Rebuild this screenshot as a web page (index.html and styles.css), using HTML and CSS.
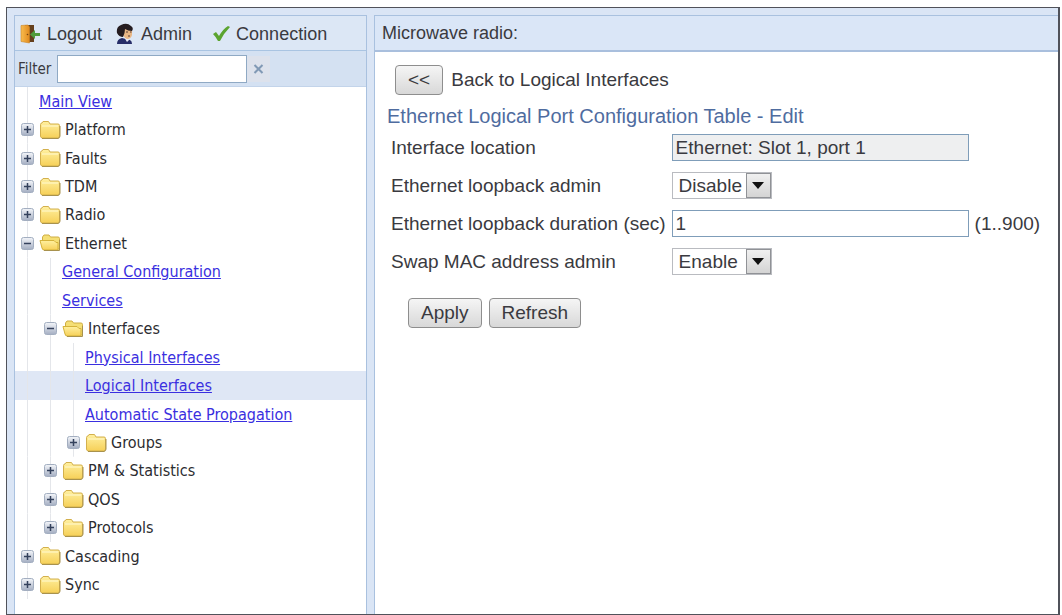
FILE: index.html
```html
<!DOCTYPE html>
<html lang="en">
<head>
    <meta charset="UTF-8">
    <meta name="viewport" content="width=device-width, initial-scale=1.0">
    <title>Microwave radio</title>
    <link rel="stylesheet" href="styles.css">
</head>
<body>
    <!-- Shared icons -->
    <svg class="sprite" aria-hidden="true">
        <defs>
            <linearGradient id="folderFill" x1="0" y1="0" x2="0" y2="1">
                <stop offset="0" stop-color="#fff0a0"/>
                <stop offset="1" stop-color="#f6d058"/>
            </linearGradient>
            <linearGradient id="boxFill" x1="0" y1="0" x2="0" y2="1">
                <stop offset="0" stop-color="#f4f6fa"/>
                <stop offset="1" stop-color="#a4aec2"/>
            </linearGradient>
            <linearGradient id="doorFill" x1="0" y1="0" x2="1" y2="0">
                <stop offset="0" stop-color="#f9bd4f"/>
                <stop offset="1" stop-color="#e18a1e"/>
            </linearGradient>
        </defs>
        <symbol id="folder" viewBox="0 0 22 20">
            <path d="M1.5 16V4.500Q1.500 3 3 3L4 1.500H9.500L11 4H19Q20.500 4 20.500 5.500V16Q20.500 18 18.500 18H3.500Q1.500 18 1.500 16Z" fill="url(#folderFill)" stroke="#d3b04d"/>
            <path d="M3 18.500H19Q21 18 21 16V6" fill="none" stroke="#a8924e"/>
            <path d="M3 6H19" stroke="#fff9d0"/>
        </symbol>
        <symbol id="folder-open" viewBox="0 0 22 20">
            <path d="M3.500 16V4L5 2H10L11.500 4H19Q20.500 4 20.500 5.500V16Z" fill="#f5df75" stroke="#cfae45"/>
            <path d="M1 7.500H15L17 9.500H19V17H5Q3.500 17 3 15Z" fill="url(#folderFill)" stroke="#d5b33b"/>
            <path d="M5 17.500H20.500V7" fill="none" stroke="#a8924e"/>
        </symbol>
        <symbol id="plus" viewBox="0 0 13 13">
            <rect x=".5" y=".5" width="12" height="12" rx="2" fill="url(#boxFill)" stroke="#a3aec0"/>
            <path d="M3 6.500H10M6.500 3V10" stroke="#34415c" stroke-width="1.500"/>
        </symbol>
        <symbol id="minus" viewBox="0 0 13 13">
            <rect x=".5" y=".5" width="12" height="12" rx="2" fill="url(#boxFill)" stroke="#a3aec0"/>
            <path d="M3 6.500H10" stroke="#34415c" stroke-width="1.500"/>
        </symbol>
    </svg>

    <div class="frame">
        <div class="sidebar">
            <div class="toolbar">
                <button type="button" class="tool">
                    <svg width="21" height="20" viewBox="0 0 21 20" aria-hidden="true">
                        <path d="M5 1H14V18H7Z" fill="#65401d"/>
                        <path d="M1 1.500L8 1L9.500 3V19L1 17.500Z" fill="url(#doorFill)" stroke="#c98527" stroke-width=".6"/>
                        <circle cx="7.500" cy="10.500" r=".8" fill="#754511"/>
                        <path d="M20 9H15V6L10 10.500L15 15V12H20Z" fill="#4f9b3b"/>
                    </svg>
                    Logout
                </button>
                <button type="button" class="tool">
                    <svg width="19" height="22" viewBox="0 0 19 22" aria-hidden="true">
                        <path d="M1 21Q1 16 6 15L14 17Q16 18 16 21Z" fill="#272d68"/>
                        <path d="M8 14L11 19L14 16L13 13H9Z" fill="#e8eaf4"/>
                        <path d="M7 5Q12 3 16 7V12Q15 16 11 16Q8 15 6 10Z" fill="#e9b785"/>
                        <path d="M1 10Q0 4 5 2Q11-1 15 3Q18 5 16 8Q12 8 9 6Q9 10 7 14Q3 14 1 10Z" fill="#251c20"/>
                        <path d="M10 9H12M14 9H15.500M12 13H14" stroke="#583a32"/>
                    </svg>
                    Admin
                </button>
                <button type="button" class="tool">
                    <svg width="24" height="18" viewBox="-6 0 24 18" aria-hidden="true">
                        <path d="M1 9L4 7L7 11Q11 4 16 1L18 2Q12 8 8 16H6Q4 12 1 9Z" fill="#5ba42f"/>
                    </svg>
                    Connection
                </button>
            </div>
            <div class="filter">
                <label for="filter">Filter</label>
                <input type="text" id="filter" name="filter">
                <button type="button" class="clear" aria-label="Clear filter">
                    <svg width="11" height="10" viewBox="0 0 11 10" aria-hidden="true">
                        <path d="M1.500 1L9.500 9M9.500 1L1.500 9" stroke="#8199b5" stroke-width="2"/>
                    </svg>
                </button>
            </div>

            <!-- Navigation tree -->
            <ul class="tree">
                <li><i></i><a href="#">Main View</a></li>
                <li><i><svg><use href="#plus"/></svg></i><svg class="folder"><use href="#folder"/></svg>Platform</li>
                <li><i><svg><use href="#plus"/></svg></i><svg class="folder"><use href="#folder"/></svg>Faults</li>
                <li><i><svg><use href="#plus"/></svg></i><svg class="folder"><use href="#folder"/></svg>TDM</li>
                <li><i><svg><use href="#plus"/></svg></i><svg class="folder"><use href="#folder"/></svg>Radio</li>
                <li><i><svg><use href="#minus"/></svg></i><svg class="folder"><use href="#folder-open"/></svg>Ethernet</li>
                <li><i></i><i></i><a href="#">General Configuration</a></li>
                <li><i></i><i></i><a href="#">Services</a></li>
                <li><i></i><i><svg><use href="#minus"/></svg></i><svg class="folder"><use href="#folder-open"/></svg>Interfaces</li>
                <li><i></i><i></i><i></i><a href="#">Physical Interfaces</a></li>
                <li class="selected"><i></i><i></i><i></i><a href="#">Logical Interfaces</a></li>
                <li><i></i><i></i><i></i><a href="#">Automatic State Propagation</a></li>
                <li><i></i><i></i><i><svg><use href="#plus"/></svg></i><svg class="folder"><use href="#folder"/></svg>Groups</li>
                <li><i></i><i><svg><use href="#plus"/></svg></i><svg class="folder"><use href="#folder"/></svg>PM &amp; Statistics</li>
                <li><i></i><i><svg><use href="#plus"/></svg></i><svg class="folder"><use href="#folder"/></svg>QOS</li>
                <li><i></i><i><svg><use href="#plus"/></svg></i><svg class="folder"><use href="#folder"/></svg>Protocols</li>
                <li><i><svg><use href="#plus"/></svg></i><svg class="folder"><use href="#folder"/></svg>Cascading</li>
                <li><i><svg><use href="#plus"/></svg></i><svg class="folder"><use href="#folder"/></svg>Sync</li>
            </ul>
        </div>

        <div class="main">
            <div class="main-header">Microwave radio:</div>
            <form class="content">
                <div class="back">
                    <button type="button" id="back" class="btn">&lt;&lt;</button>
                    <label for="back">Back to Logical Interfaces</label>
                </div>
                <h1>Ethernet Logical Port Configuration Table - Edit</h1>
                <div class="fields">
                    <label for="location">Interface location</label>
                    <input type="text" id="location" value="Ethernet: Slot 1, port 1" readonly>

                    <label for="loopback">Ethernet loopback admin</label>
                    <div class="select">
                        <select id="loopback">
                            <option>Disable</option>
                            <option>Enable</option>
                        </select>
                        <span class="arrow"></span>
                    </div>

                    <label for="duration">Ethernet loopback duration (sec)</label>
                    <input type="text" id="duration" value="1">
                    <span class="range">(1..900)</span>

                    <label for="swap">Swap MAC address admin</label>
                    <div class="select">
                        <select id="swap">
                            <option>Enable</option>
                            <option>Disable</option>
                        </select>
                        <span class="arrow"></span>
                    </div>
                </div>
                <div class="actions">
                    <button type="button" class="btn">Apply</button>
                    <button type="button" class="btn">Refresh</button>
                </div>
            </form>
        </div>
    </div>
</body>
</html>
```

FILE: styles.css
```css
* { margin: 0; padding: 0; box-sizing: border-box; }
body {
    display: flex;
    min-height: 100vh;
    padding: 7px 2px 0 6px;
    background: #fff;
    color: #3a3a40;
    font-family: "Liberation Sans", Arial, sans-serif;
    font-size: 18px;
}
button, input, select { font: inherit; color: inherit; }
.sprite { position: absolute; width: 0; height: 0; }
.frame {
    flex: 1;
    display: flex;
    gap: 7px;
    padding: 7px 0 0 7px;
    border: 1px solid #50525a;
    border-width: 1px 2px 1px 1px;
    background: #dae5f5;
}

/* Sidebar */
.sidebar {
    flex: 0 0 353px;
    display: flex;
    flex-direction: column;
    border: 1px solid #a9c1df;
    border-bottom: none;
    background: #fff;
}
.toolbar {
    display: flex;
    align-items: center;
    gap: 14px;
    height: 35px;
    padding: 2px 5px 0;
    border-bottom: 1px solid #a9c4e2;
    background: #dce7f5;
}
.tool { display: flex; align-items: center; gap: 6px; border: none; background: none; }
.filter {
    display: flex;
    align-items: center;
    height: 36px;
    padding-left: 3px;
    border-bottom: 1px solid #c3d4ea;
    background: #d4e1f2;
    font-family: "DejaVu Sans Condensed", "DejaVu Sans", sans-serif;
    font-size: 15px;
}
.filter input { width: 190px; height: 28px; margin-left: 6px; padding: 0 4px; border: 1px solid #8fa9c4; background: #fff; }
.clear { display: flex; align-items: center; justify-content: center; width: 23px; height: 26px; border: none; background: #dde2ec; }

/* Tree */
.tree {
    flex: 1;
    display: grid;
    grid-auto-rows: 1fr;
    padding-bottom: 15px;
    list-style: none;
    font-family: "DejaVu Sans Condensed", "DejaVu Sans", sans-serif;
    font-size: 16px;
}
.tree li { display: flex; align-items: center; min-height: 24px; padding-left: 1px; color: #2c2c30; white-space: nowrap; }
.tree i {
    align-self: stretch;
    display: flex;
    align-items: center;
    justify-content: center;
    width: 23px;
    background: linear-gradient(#e4e6ea, #e4e6ea) center / 1px 100% no-repeat;
}
.tree i svg { width: 13px; height: 13px; }
.tree .folder { width: 22px; height: 20px; margin-right: 4px; }
.tree a { color: #3a2fe0; }
.tree .selected { background: #dfe7f5; }

/* Main panel */
.main { flex: 1; border: 1px solid #a9c1df; border-width: 1px 0 0 1px; background: #fff; }
.main-header {
    display: flex;
    align-items: center;
    height: 36px;
    padding-left: 7px;
    border-bottom: 2px solid #a9bfdd;
    background: #dae6f7;
}
.content { padding: 13px 12px; font-size: 19px; }
.back { display: flex; align-items: center; gap: 8px; padding-left: 8px; }
.btn { height: 30px; padding: 0 12px; border: 1px solid #8e8e8e; border-radius: 4px; background: linear-gradient(#f5f5f5, #d8d8d8); }
h1 { margin: 10px 0 6px; color: #4f6c9f; font-size: 20px; line-height: 23px; font-weight: normal; }
.fields {
    display: grid;
    grid-template-columns: auto minmax(0, 297px) auto;
    justify-content: start;
    align-items: center;
    gap: 11px 6px;
    padding-left: 4px;
}
.fields label { grid-column: 1; }
.fields input { width: 100%; height: 27px; padding: 0 3px; border: 1px solid #7f9db9; background: #fff; }
.fields input[readonly] { background: #eeeff0; }
.select { position: relative; justify-self: start; }
.select select { display: block; width: 100px; height: 27px; padding-left: 6px; border: 1px solid #b9bbc0; border-radius: 0; background: #fff; appearance: none; }
.arrow {
    position: absolute;
    top: 1px;
    right: 1px;
    display: flex;
    align-items: center;
    justify-content: center;
    width: 25px;
    height: 25px;
    border: 1px solid #909296;
    background: linear-gradient(#f0f0f0, #d4d4d4);
    pointer-events: none;
}
.arrow::before { content: ""; border: 6px solid transparent; border-top: 7px solid #111; border-bottom: none; }
.actions { display: flex; gap: 7px; margin-top: 23px; padding-left: 21px; }
```
